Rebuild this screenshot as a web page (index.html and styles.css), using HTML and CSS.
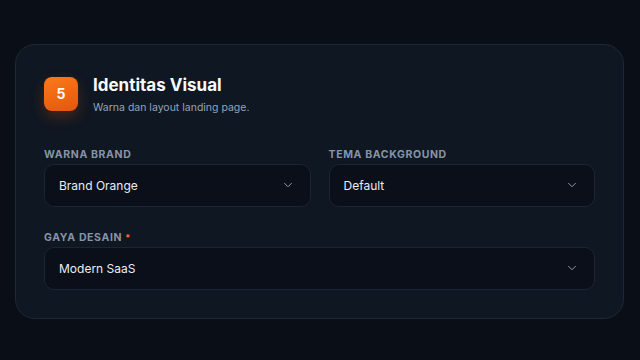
FILE: index.html
```html
<!DOCTYPE html>
<html lang="id">
<head>
    <meta charset="UTF-8">
    <meta name="viewport" content="width=device-width, initial-scale=1.0">
    <title>Identitas Visual</title>
    <link rel="stylesheet" href="styles.css">
</head>
<body>
    <div class="card">
        <div class="card-header">
            <div class="step">5</div>
            <div>
                <h2 class="title">Identitas Visual</h2>
                <p class="subtitle">Warna dan layout landing page.</p>
            </div>
        </div>

        <div class="grid">
            <div class="field">
                <label class="label">Warna Brand</label>
                <div class="select">
                    <span>Brand Orange</span>
                    <svg class="chevron" viewBox="0 0 24 24" width="14" height="14"><path d="M6 9l6 6 6-6"/></svg>
                </div>
            </div>
            <div class="field">
                <label class="label">Tema Background</label>
                <div class="select">
                    <span>Default</span>
                    <svg class="chevron" viewBox="0 0 24 24" width="14" height="14"><path d="M6 9l6 6 6-6"/></svg>
                </div>
            </div>
            <div class="field wide">
                <label class="label">Gaya Desain <span class="req">*</span></label>
                <div class="select">
                    <span>Modern SaaS</span>
                    <svg class="chevron" viewBox="0 0 24 24" width="14" height="14"><path d="M6 9l6 6 6-6"/></svg>
                </div>
            </div>
        </div>
    </div>
</body>
</html>
```

FILE: styles.css
```css
body {
    font-family: 'Inter', 'Noto Sans', sans-serif;
    background-color: #0a0e16;
    color: #e2e8f0;
    margin: 0;
    padding: 0 16px 0 15px;
    display: flex;
    justify-content: center;
    align-items: center;
    min-height: 100vh;
    box-sizing: border-box;
}

.card {
    background-color: #0f1722;
    border: 1px solid #1e2836;
    border-radius: 20px;
    width: 100%;
    padding: 32px 28px 28px;
    box-sizing: border-box;
    margin-top: 2px;
}

.card-header {
    display: flex;
    align-items: flex-start;
    gap: 15px;
    margin-bottom: 34px;
}

.step {
    width: 34px;
    height: 34px;
    border-radius: 8px;
    background: linear-gradient(160deg, #fb7a1c, #e5560a);
    box-shadow: 0 6px 14px rgba(234, 88, 12, 0.25);
    color: #fff;
    font-weight: 700;
    font-size: 14px;
    display: flex;
    justify-content: center;
    align-items: center;
    flex-shrink: 0;
}

.title {
    margin: 0;
    font-size: 17px;
    font-weight: 700;
    color: #f8fafc;
    line-height: 20px;
    margin-top: -2px;
}

.subtitle {
    margin: 6px 0 0;
    font-size: 10.5px;
    color: #94a3b8;
}

.grid {
    display: grid;
    grid-template-columns: 1fr 1fr;
    column-gap: 18px;
    row-gap: 24px;
}

.wide {
    grid-column: span 2;
}

.label {
    display: block;
    font-size: 10.5px;
    font-weight: 700;
    letter-spacing: 0.06em;
    text-transform: uppercase;
    color: #8794a8;
    margin-bottom: 3px;
}

.req {
    color: #f97316;
    font-size: 9px;
}

.select {
    background-color: #0a0f19;
    border: 1px solid #1c2533;
    border-radius: 10px;
    height: 43px;
    box-sizing: border-box;
    padding: 0 15px 0 14px;
    display: flex;
    justify-content: space-between;
    align-items: center;
    font-size: 12px;
    color: #e8edf3;
}

.chevron {
    fill: none;
    stroke: #94a3b8;
    stroke-width: 1.6;
    stroke-linecap: round;
    stroke-linejoin: round;
}
```
